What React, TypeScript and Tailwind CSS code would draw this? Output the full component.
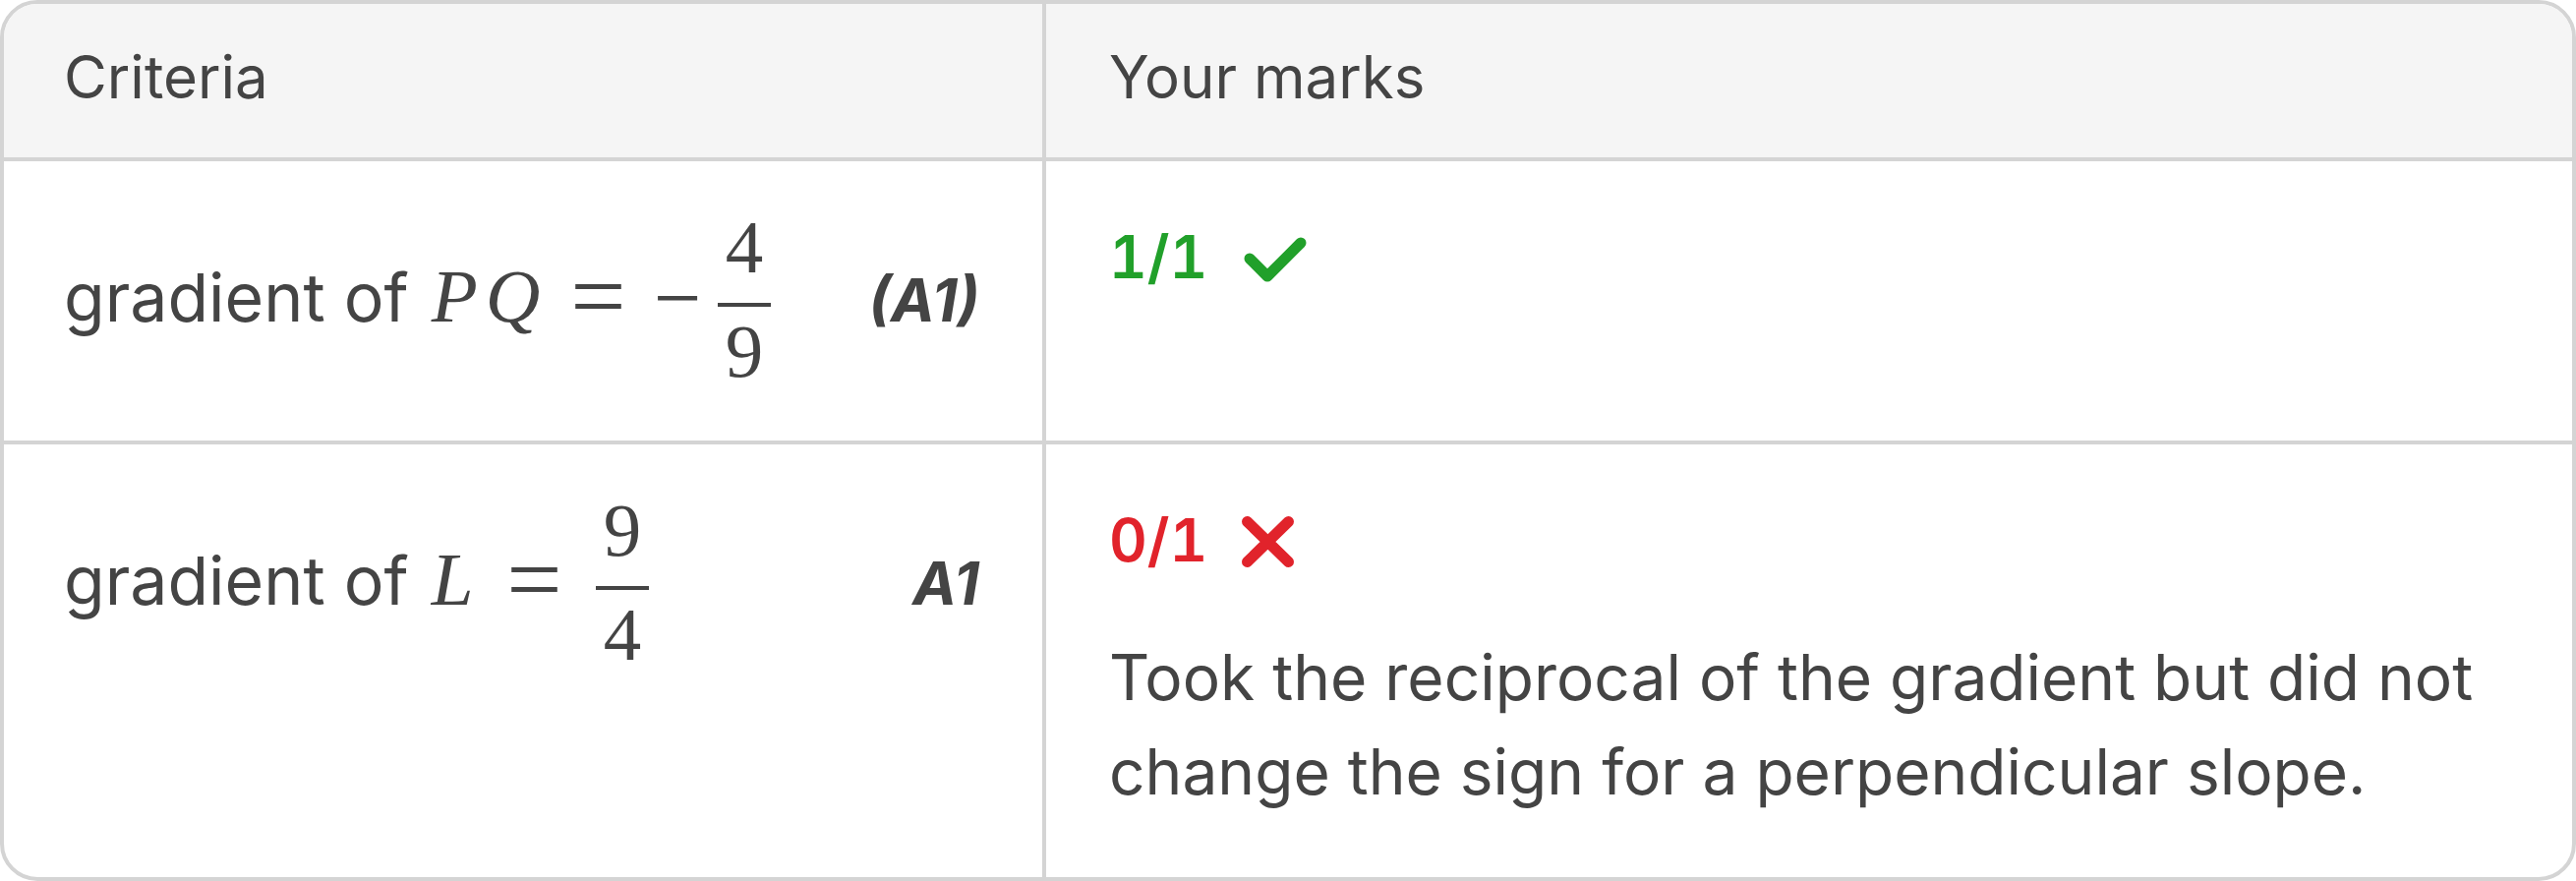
import React from "react";

function Frac({ num, den, className }: { num: string; den: string; className: string }) {
  return (
    <span className={"inline-flex flex-col items-stretch align-[50px] " + className}>
      <span className="block text-center leading-[77px] pb-[18px] px-[8px]">{num}</span>
      <span className="block h-[4px] bg-[#444444]" />
      <span className="block text-center leading-[77px] pt-[7px] px-[8px]">{den}</span>
    </span>
  );
}

function CheckIcon() {
  return (
    <svg width="66" height="47" viewBox="0 0 66 47" fill="none" className="ml-[36px] mt-[6px]">
      <path d="M7 22 L25 40 L59 6" stroke="#21a02a" strokeWidth="11" strokeLinecap="round" strokeLinejoin="round" />
    </svg>
  );
}

function CrossIcon() {
  return (
    <svg width="53" height="52" viewBox="0 0 53 52" fill="none" className="ml-[35px] mt-[4px]">
      <path d="M5.5 5.5 L47.5 46.5 M47.5 5.5 L5.5 46.5" stroke="#e1232b" strokeWidth="11" strokeLinecap="round" />
    </svg>
  );
}

export default function App() {
  return (
    <div className="w-[2620px] h-[896px] bg-white font-['Inter',sans-serif] text-[#444444]">
      <div className="grid grid-cols-[1060px_1fr] rounded-[38px] border-4 border-[#d4d4d4] overflow-hidden">
        {/* Header */}
        <div className="h-[160px] bg-[#f5f5f5] border-r-4 border-b-4 border-[#d4d4d4] pt-[26px] pl-[61px] pr-[64px] text-[60px] leading-[96px]">
          Criteria
        </div>
        <div className="h-[160px] bg-[#f5f5f5] border-b-4 border-[#d4d4d4] pt-[26px] px-[64px] text-[60px] leading-[96px]">
          Your marks
        </div>

        {/* Row 1 */}
        <div className="border-r-4 border-b-4 border-[#d4d4d4] pt-[49px] pb-[52px] pl-[61px] pr-[64px]">
          <div className="flex items-center justify-between">
            <div className="whitespace-nowrap text-[68px] leading-[96px]">
              gradient of{" "}
              <span className="ml-[4px] font-['Liberation_Serif',serif] text-[77px] leading-[77px]">
                <span className="italic inline-block w-[55px]">P</span>
                <span className="italic inline-block w-[82px]">Q</span>
                <span className="inline-block w-[65px] text-center text-[100px] align-[-8px]">=</span>
                <span className="inline-block w-[59px] ml-[19px] text-center text-[86px] align-[-5px]">−</span>
                <Frac num="4" den="9" className="ml-[11px]" />
              </span>
            </div>
            <span className="font-bold italic text-[60px] leading-none">(A1)</span>
          </div>
        </div>
        <div className="border-b-4 border-[#d4d4d4] pt-[49px] px-[64px]">
          <div className="flex items-center h-[96px] text-[60px] font-semibold tabular-nums text-[#21a02a]">
            <span className="leading-[96px]">1/1</span>
            <CheckIcon />
          </div>
        </div>

        {/* Row 2 */}
        <div className="border-r-4 border-[#d4d4d4] pt-[49px] pl-[61px] pr-[64px]">
          <div className="flex items-center justify-between">
            <div className="whitespace-nowrap text-[68px] leading-[96px]">
              gradient of{" "}
              <span className="ml-[4px] font-['Liberation_Serif',serif] text-[77px] leading-[77px]">
                <span className="italic inline-block w-[72px]">L</span>
                <span className="inline-block w-[65px] text-center text-[100px] align-[-8px]">=</span>
                <Frac num="9" den="4" className="ml-[30px]" />
              </span>
            </div>
            <span className="font-bold italic text-[60px] leading-none">A1</span>
          </div>
        </div>
        <div className="pt-[49px] pb-[59px] px-[64px]">
          <div className="flex items-center h-[96px] text-[60px] font-semibold tabular-nums text-[#e1232b]">
            <span className="leading-[96px]">0/1</span>
            <CrossIcon />
          </div>
          <p className="mt-[44px] text-[64px] leading-[96px]">
            Took the reciprocal of the gradient but did not change the sign for a perpendicular slope.
          </p>
        </div>
      </div>
    </div>
  );
}
